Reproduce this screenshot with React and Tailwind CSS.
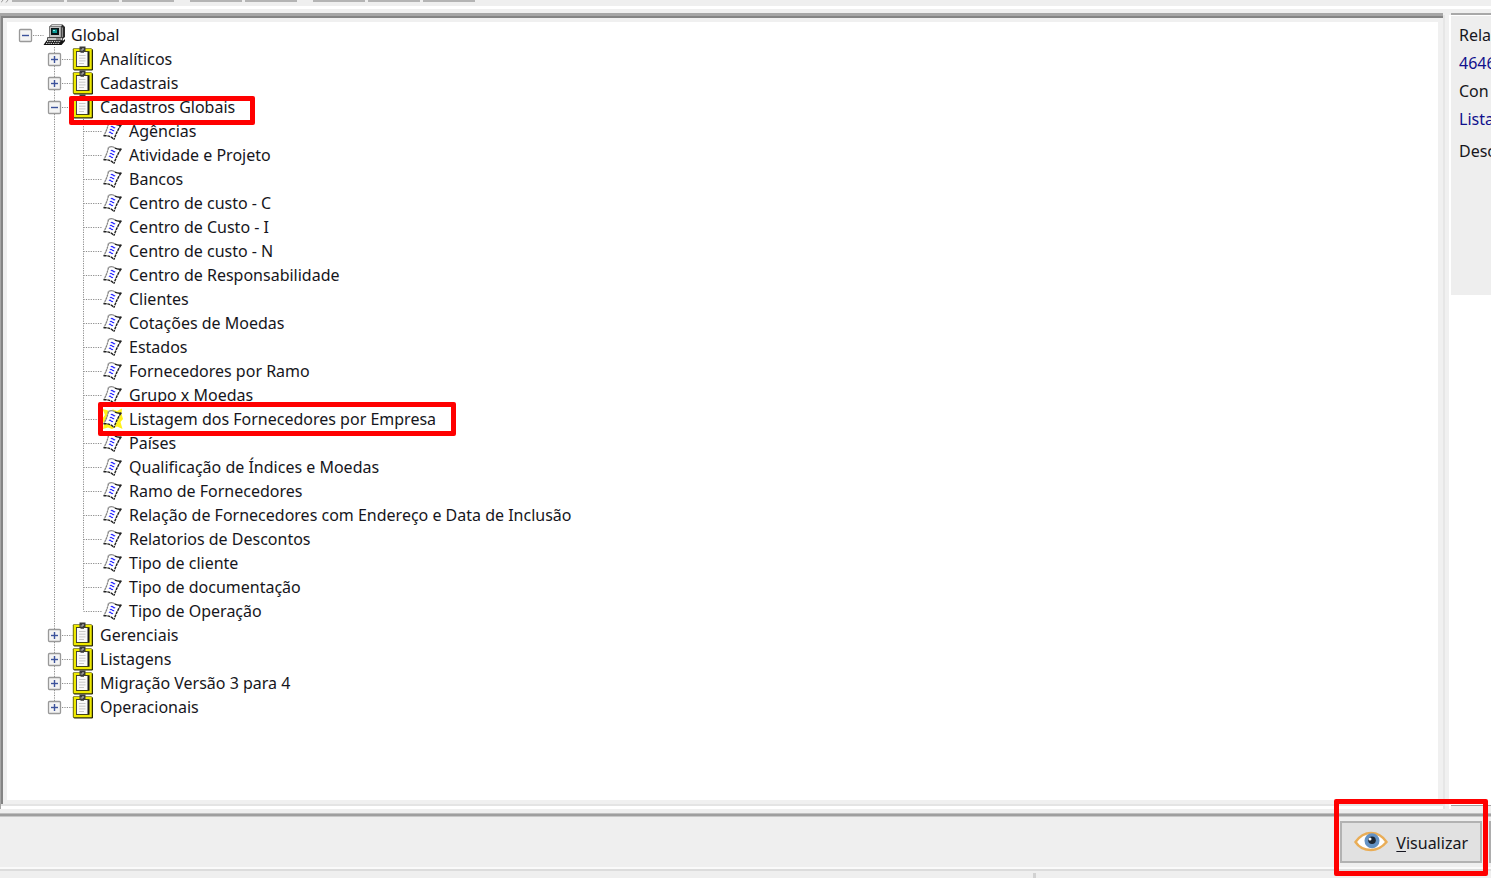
import React, { useState } from 'react';

const reports = [
  'Agências',
  'Atividade e Projeto',
  'Bancos',
  'Centro de custo - C',
  'Centro de Custo - I',
  'Centro de custo - N',
  'Centro de Responsabilidade',
  'Clientes',
  'Cotações de Moedas',
  'Estados',
  'Fornecedores por Ramo',
  'Grupo x Moedas',
  'Listagem dos Fornecedores por Empresa',
  'Países',
  'Qualificação de Índices e Moedas',
  'Ramo de Fornecedores',
  'Relação de Fornecedores com Endereço e Data de Inclusão',
  'Relatorios de Descontos',
  'Tipo de cliente',
  'Tipo de documentação',
  'Tipo de Operação',
];

const folders = [
  { name: 'Analíticos' },
  { name: 'Cadastrais' },
  { name: 'Cadastros Globais', items: reports, marked: true },
  { name: 'Gerenciais' },
  { name: 'Listagens' },
  { name: 'Migração Versão 3 para 4' },
  { name: 'Operacionais' },
];

const SELECTED = 'Listagem dos Fornecedores por Empresa';

const ComputerIcon = () => (
  <svg width="23" height="24" viewBox="0 0 23 24" className="shrink-0">
    <path d="M6 4 L8.500 1.500 H19.500 L22 4 V14 L19 16.500 H7 Z" fill="#2a2a2a" />
    <path d="M7 3.500 L9 2 H19 L17.800 3.500 Z" fill="#d8d8d8" />
    <path d="M6.500 3.500 H18 V14.500 H6.500 Z" fill="#c4c4c4" stroke="#777" strokeWidth="0.800" />
    <path d="M8 5 H16 V12 H8 Z" fill="#0a1517" />
    <path d="M9.500 6.500 H14 V10 H9.500 Z" fill="#0a9c98" />
    <path d="M10 7 H12 V8 H10 Z" fill="#8ff0ea" />
    <path d="M19.500 4.500 V14" stroke="#8b8b8b" />
    <path d="M4.500 14.500 H19.500 V17.500 H4.500 Z" fill="#c9c9c9" stroke="#333" strokeWidth="0.800" />
    <path d="M13 16 H18" stroke="#444" strokeWidth="0.900" />
    <path d="M3.500 17.500 H20.500 L22 16 V18 L18.500 22 H0.500 Z" fill="#111" />
    <path d="M4 18.600 H18 M3 20.400 H17" stroke="#e4e4e4" strokeWidth="1" strokeDasharray="1.400 0.900" />
  </svg>
);

const ClipboardIcon = () => (
  <svg width="23" height="26" viewBox="0 0 23 26" className="shrink-0">
    <rect x="1.500" y="3" width="19.500" height="21.500" rx="1.200" fill="#262606" />
    <rect x="0.800" y="2.200" width="19.200" height="21.500" rx="1" fill="#6f6e0e" />
    <rect x="1.800" y="3" width="17.800" height="20" fill="#efea00" />
    <rect x="4" y="5.200" width="13.500" height="15.600" fill="#1c1c1c" />
    <rect x="4.800" y="6" width="10.700" height="14" fill="#fafafa" />
    <path d="M7 9.500 H13.500 M7 12.200 H13.500 M7 14.900 H13.500 M7 17.500 H12" stroke="#c9c9c9" />
    <path d="M7.500 0.500 H13.500 V5.500 H12 V6.800 H8.500 V5.500 H7.500 Z" fill="#3a3a3a" />
    <path d="M8.500 4 H11 M11 2 V4" stroke="#b5b5b5" strokeWidth="1.200" />
  </svg>
);

const ReportIcon = ({ active }) => (
  <svg width="21" height="22" viewBox="0 0 21 22" className="shrink-0">
    {active && (
      <path
        d="M0.500 1 L4.500 2 L7 3 L11 1.500 L15 3 L20 0.500 L19.500 6 L21 11 L18.500 14 L20.500 21 L15 18.500 L10 21 L6 19.500 L1 21 L2 15.500 L0 11 L3 7 Z"
        fill="#fff21a"
      />
    )}
    <path d="M6.500 3 Q10 1.500 13 4 Q16 6 20 4.500 Q15 12 12 20 Q7 15 1.500 16 Q5 10 6.500 3 Z" fill="#fff" />
    <path d="M6.500 3.500 Q10 1.500 13 4" fill="none" stroke="#8a8a8a" strokeWidth="1.400" />
    <path d="M13 4.200 Q16 5.600 19.500 5" fill="none" stroke="#222" strokeWidth="1.400" />
    <path d="M6.500 3.500 Q5 10 2 15.500" fill="none" stroke="#858585" strokeWidth="1.300" strokeDasharray="2.400 0.500" />
    <path d="M19 5 Q14.500 12 12 19.500" fill="none" stroke="#222" strokeWidth="1.400" strokeDasharray="3 0.600" />
    <path d="M1.500 15.800 Q8 15 12 19.500" fill="none" stroke="#222" strokeWidth="1.400" strokeDasharray="3 0.700" />
    <path
      d="M8.800 6.800 Q10 5.800 11 7 T13.200 7.500 M7.900 9.700 Q9 8.700 10 9.900 T12.200 10.400 M7 12.600 Q8 11.600 9 12.800 T11 13.300"
      fill="none"
      stroke="#2c2cff"
      strokeWidth="1.200"
    />
  </svg>
);

const EyeIcon = () => (
  <svg width="34" height="22" viewBox="0 0 34 22" className="shrink-0">
    <path d="M1 11 C6 4 11 1 17 1 C24 1 29 5 33 11 C28 17 23 20 17 20 C10 20 5 17 1 11 Z" fill="#fff" />
    <path
      d="M1.500 11 C6 4.500 11 2 17 2 C24 2 28.500 5 32.500 11 C28 16.500 23 19 17 19 C10 19 5 16.500 1.500 11 Z"
      fill="none"
      stroke="#e9ad57"
      strokeWidth="2.400"
    />
    <circle cx="18" cy="9.800" r="7.500" fill="#6492c4" />
    <circle cx="18" cy="9.300" r="3.800" fill="#1d2733" />
    <circle cx="16" cy="8" r="1.500" fill="#fff" />
  </svg>
);

// One column of dotted connector lines
const Guide = ({ up, down, right }) => (
  <svg width="29" height="24" viewBox="0 0 29 24" className="shrink-0 overflow-visible">
    <g stroke="#8c8c8c" strokeWidth="1" strokeDasharray="1.200 1.200">
      {up && <path d="M14.500 0 V12" />}
      {down && <path d="M14.500 12 V24" />}
      {right && <path d="M14.500 12.500 H33" />}
    </g>
  </svg>
);

const Expander = ({ open, label, onToggle, up, down }) => (
  <button type="button" aria-label={label} aria-expanded={open} onClick={onToggle} className="h-6 w-[29px] shrink-0">
    <svg width="29" height="24" viewBox="0 0 29 24" className="overflow-visible">
      <g stroke="#8c8c8c" strokeWidth="1" strokeDasharray="1.200 1.200">
        {up && <path d="M14.500 0 V6" />}
        {down && <path d="M14.500 19 V24" />}
        <path d="M22 12.500 H32.500" />
      </g>
      <rect x="8.500" y="6.500" width="12" height="12" rx="1" fill="#f4f4f4" stroke="#999" strokeWidth="1.300" />
      <path d="M11 12.500 H18" stroke="#3c539c" strokeWidth="1.400" />
      {!open && <path d="M14.500 9 V16" stroke="#3c539c" strokeWidth="1.400" />}
    </svg>
  </button>
);

const NodeLabel = ({ icon, children }) => (
  <>
    <span className="flex h-6 w-[29px] shrink-0 items-center justify-center">{icon}</span>
    <span className="ml-0.5 whitespace-nowrap">{children}</span>
  </>
);

const Tree = () => {
  const [rootOpen, setRootOpen] = useState(true);
  const [openFolders, setOpenFolders] = useState(['Cadastros Globais']);
  const [selected, setSelected] = useState(SELECTED);

  const toggleFolder = (name) => {
    setOpenFolders(
      openFolders.includes(name) ? openFolders.filter((f) => f !== name) : [...openFolders, name]
    );
  };

  return (
    <ul className="pl-1">
      <li>
        <div className="flex h-6 items-center">
          <Expander open={rootOpen} label="Global" onToggle={() => setRootOpen(!rootOpen)} />
          <NodeLabel icon={<ComputerIcon />}>Global</NodeLabel>
        </div>
        {rootOpen && (
          <ul>
            {folders.map((folder, i) => {
              const open = openFolders.includes(folder.name);
              const last = i === folders.length - 1;
              return (
                <li key={folder.name}>
                  <div className="flex h-6 items-center">
                    <Guide />
                    <Expander
                      open={open}
                      label={folder.name}
                      onToggle={() => toggleFolder(folder.name)}
                      up
                      down={!last}
                    />
                    <div className="relative flex h-6 items-center">
                      <NodeLabel icon={<ClipboardIcon />}>{folder.name}</NodeLabel>
                      {folder.marked && (
                        <span className="pointer-events-none absolute top-px -right-5 -bottom-1.5 left-0 z-10 rounded-xs border-5 border-[#ff0000]" />
                      )}
                    </div>
                  </div>
                  {open && folder.items && (
                    <ul>
                      {folder.items.map((item, j) => (
                        <li key={item} className="flex h-6 items-center">
                          <Guide />
                          <Guide up={!last} down={!last} />
                          <Guide up down={j < folder.items.length - 1} right />
                          <button
                            type="button"
                            onClick={() => setSelected(item)}
                            className="relative flex h-6 items-center"
                          >
                            <NodeLabel icon={<ReportIcon active={item === selected} />}>{item}</NodeLabel>
                            {item === SELECTED && (
                              <span className="pointer-events-none absolute -inset-y-[5px] -right-5 left-0 z-10 rounded-xs border-5 border-[#ff0000]" />
                            )}
                          </button>
                        </li>
                      ))}
                    </ul>
                  )}
                </li>
              );
            })}
          </ul>
        )}
      </li>
    </ul>
  );
};

const ToolbarGroup = ({ count }) => (
  <div className="flex gap-[3px]">
    {Array.from({ length: count }, (_, i) => (
      <div key={i} className="h-0.5 w-[52px] bg-[#b4b4b4]" />
    ))}
  </div>
);

export default function App() {
  return (
    <div className="flex h-screen flex-col overflow-hidden bg-[#efefef] font-['Noto_Sans','Open_Sans',sans-serif] text-base leading-6 text-[#161620]">
      <header className="flex h-[9px] shrink-0 items-start gap-4 border-b-3 border-white pl-px">
        <div className="flex">
          <svg width="11" height="3" viewBox="0 0 11 3">
            <path d="M0 2.500 L2 0 M5 2.500 L7 0" stroke="#999" />
          </svg>
          <ToolbarGroup count={3} />
        </div>
        <ToolbarGroup count={2} />
        <ToolbarGroup count={3} />
      </header>

      <div className="flex min-h-0 flex-1 pt-1">
        <main className="flex min-w-0 flex-1 flex-col border-t-3 border-l border-[#a6a6a6]">
          <div className="flex min-h-0 flex-1 border-t-2 border-l-2 border-[#848484]">
            <div className="min-w-0 flex-1 overflow-hidden border-4 border-r-5 border-[#f0f0f0] bg-white pt-px">
              <Tree />
            </div>
          </div>
          <div className="h-[5px] shrink-0 border-t-2 border-[#e4e4e4] bg-white" />
        </main>
        <div className="mt-0.5 w-2 shrink-0 border-x-2 border-l-[#e6e6e6] border-r-white bg-[#f0f0f0]" />
        <aside className="flex w-10 shrink-0 flex-col overflow-hidden border-t-2 border-[#a8a8a8] bg-white whitespace-nowrap">
          <div className="flex h-[280px] shrink-0 flex-col border-t border-white bg-[#eeeeee] pt-[7px] pl-2">
            <span className="h-7">Rela</span>
            <span className="h-7 text-[#10108c]">4646</span>
            <span className="h-7">Con</span>
            <span className="h-8 text-[#10108c]">Lista</span>
            <span>Desc</span>
          </div>
          <div className="mt-auto h-1 border-t border-[#a0a0a0] bg-[#f0f0f0]" />
        </aside>
      </div>

      <div className="mt-1 shrink-0 border-y border-t-[#c0c0c0] border-b-[#c8c8c8] bg-[#9f9f9f] pt-0.5" />
      <div className="flex h-[50px] shrink-0 justify-end pt-1">
        <div className="relative h-[42px]">
          <button
            type="button"
            className="flex h-full items-center gap-2 border-2 border-[#b2b2b2] bg-[#e1e1e1] px-3"
          >
            <EyeIcon />
            <span className="pt-0.5">
              <span className="underline underline-offset-2">V</span>isualizar
            </span>
          </button>
          <span className="pointer-events-none absolute -top-[22px] -right-1.5 -bottom-[13px] -left-1.5 z-10 rounded-xs border-5 border-[#ff0000]" />
        </div>
        <div className="ml-[7px] h-[42px] w-0.5 bg-[#adadad]" />
      </div>

      <footer className="flex h-[11px] shrink-0 border-t-2 border-[#fafafa]">
        <div className="flex flex-1 justify-end border-t-2 border-[#dcdcdc] pr-[455px]">
          <div className="mt-0.5 h-2 w-[3px] bg-[#d2d2d2]" />
        </div>
      </footer>
    </div>
  );
}
